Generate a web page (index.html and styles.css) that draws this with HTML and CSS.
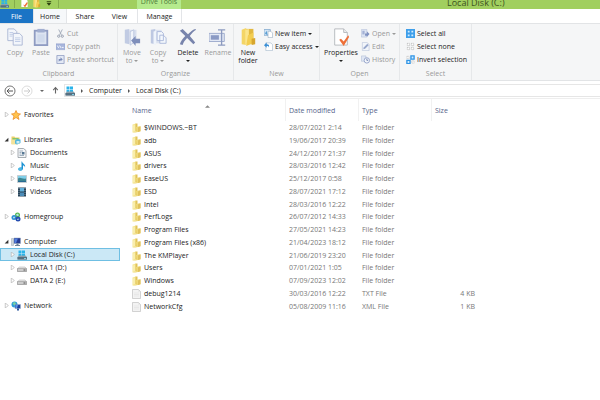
FILE: index.html
```html
<!DOCTYPE html>
<html lang="en">
<head>
<meta charset="utf-8">
<title>Local Disk (C:)</title>
<link rel="stylesheet" href="styles.css">
</head>
<body>
<svg class="sprite" aria-hidden="true">
  <symbol id="folder" viewBox="0 0 18 20"><path d="M1 3l7-2v16l-7 2z" fill="#f6e794"/><path d="M7 1h4v15H7z" fill="#e0c25a"/><path d="M8 8l9-2v11l-10 2-6 0 8-3z" fill="#eed878"/><path d="M12 9l5-2v9l-5 2z" fill="#dfc05c"/><path d="M3 5l2-1v12l-2 1z" fill="#fcf6c8"/></symbol>
  <symbol id="file" viewBox="0 0 18 20"><path d="M1 1h12l4 4v14H1z" fill="#f3f3f3" stroke="#aaa"/><path d="M13 1v4h4M4 8h10M4 11h10M4 14h10" fill="none" stroke="#ddd"/></symbol>
  <symbol id="disk" viewBox="0 0 20 20"><path d="M3 1h6v5H3zM10 1h6v5h-6zM3 7h6v5H3zM10 7h6v5h-6z" fill="#29b3ea"/><path d="M1 14l3-3h13l3 3v5H1z" fill="#8ba1ad"/><path d="M1 14h19v5H1z" fill="#566f80"/><path d="M14 16h4v2h-4z" fill="#7fd0e8"/></symbol>
  <symbol id="drive" viewBox="0 0 20 20"><path d="M1 11l4-3h11l3 3v6H1z" fill="#e6e6e6" stroke="#aaa"/><path d="M1 11h18v6H1z" fill="#ccc" stroke="#888"/><path d="M13 14h4" stroke="#555" stroke-width="2"/></symbol>
  <symbol id="star" viewBox="0 0 20 20"><path d="M10 1l3 6 6 1-5 4 2 7-6-4-6 4 2-7-5-4 6-1z" fill="#ffc34d" stroke="#ec8b26" stroke-width="1.5"/></symbol>
  <symbol id="library" viewBox="0 0 20 20"><path d="M1 3h6l1 2h9v13H1z" fill="#ebcf67"/><path d="M3 6h12v6H3z" fill="#88c56c"/><path d="M1 9h12v10H1z" fill="#f4e39a"/><path d="M8 11l4-3 7 1v7l-7 3-4-2z" fill="#54b6dc"/><path d="M11 12h6v5h-6z" fill="#cbedf5"/></symbol>
  <symbol id="docs" viewBox="0 0 20 20"><path d="M2 1h11l5 4v14H2z" fill="#f5f6f7" stroke="#8b949b" stroke-width="1.5"/><path d="M5 6h7M5 9h4M5 12h4M5 15h9" stroke="#8299ac" stroke-width="1.5"/><path d="M10 8h5v5h-5z" fill="#577894"/></symbol>
  <symbol id="music" viewBox="0 0 20 20"><path d="M10 1c1 5 8 5 6 12-1-4-3-4-4-4v6c0 3-3 5-7 4-4-2-1-7 4-6V1z" fill="#1c93d4"/><ellipse cx="6" cy="16" rx="4" ry="3" fill="#4db8e5"/></symbol>
  <symbol id="pics" viewBox="0 0 20 20"><path d="M1 3h18v14H1z" fill="#fff" stroke="#8b9ca5"/><path d="M2 4h16v6H2z" fill="#80cfe9"/><path d="M2 9c5-4 8 2 16 0v7H2z" fill="#3b8591"/><path d="M2 14h16v2H2z" fill="#276b94"/></symbol>
  <symbol id="videos" viewBox="0 0 20 20"><path d="M2 1h16v18H2z" fill="#284459"/><path d="M6 2h8v7H6z" fill="#62b1dc"/><path d="M6 11h8v7H6z" fill="#4b8cb9"/><path d="M4 2v16M16 2v16" stroke="#d7e5ee" stroke-dasharray="2 2"/></symbol>
  <symbol id="homegroup" viewBox="0 0 20 20"><circle cx="13" cy="6" r="5" fill="#55b84b"/><circle cx="6" cy="11" r="5" fill="#2f8fd3"/><circle cx="14" cy="14" r="5" fill="#254db0"/><path d="M10 5l4-2 2 4-4 1zM4 10l3-1 1 3-3 1zM12 14l3-1 1 2-3 1z" fill="#b9e6ed"/></symbol>
  <symbol id="computer" viewBox="0 0 20 20"><path d="M1 3h4v14H1z" fill="#d1d8dd" stroke="#9aa6b0"/><path d="M6 2h13v11H6z" fill="#273b91" stroke="#90a2ba"/><path d="M7 3h7l-4 9H7z" fill="#527fdf"/><path d="M11 13h4v3h3v2H8v-2h3z" fill="#72869a"/></symbol>
  <symbol id="network" viewBox="0 0 20 20"><circle cx="7" cy="7" r="6" fill="#2b9bd9"/><path d="M3 4l5-2 2 4-4 3z" fill="#7bd3a0"/><path d="M8 7h11v8H8z" fill="#223f9b" stroke="#9bb2c9"/><path d="M9 8h5l-2 6H9z" fill="#5592ea"/><path d="M12 15h4v4h-4z" fill="#29549b"/></symbol>
  <symbol id="twig" viewBox="0 0 8 8"><path d="M2 0l5 4-5 4z" fill="#fff" stroke="#aaa"/></symbol>
  <symbol id="twig-open" viewBox="0 0 8 8"><path d="M7 1v6H1z" fill="#333"/></symbol>

  <symbol id="copy" viewBox="0 0 18 20"><g fill="#f3f6fb" stroke="#a9b6d4"><path d="M1 1h7l3 3v10H1z"/><path d="M7 6h7l3 3v10H7z"/><path d="M3 5h4M3 7h4M3 9h3M9 11h6M9 13h6M9 15h6" stroke="#bccae5"/></g></symbol>
  <symbol id="paste" viewBox="0 0 18 20"><path d="M1 2h16v18H1z" fill="#8f9cc2"/><path d="M3 4h12v14H3z" fill="#dde4f1"/><path d="M5 1h8v4H5z" fill="#a1aed0"/><path d="M5 7h8v9H5z" fill="#d0daec"/></symbol>
  <symbol id="moveto" viewBox="0 0 18 20"><path d="M1 2l5-1v17l-5-1z" fill="#c1cbe3"/><path d="M6 2h8v15H6z" fill="#d7deee"/><path d="M7 4l4-2v14l-4 3z" fill="#f0f4fb" stroke="#bac5df"/><path d="M8 14l5-5v3h5v5h-5v3z" fill="#7f8fbb"/></symbol>
  <symbol id="copyto" viewBox="0 0 18 20"><path d="M1 2l5-1v17l-5-1z" fill="#bdc8e2"/><path d="M6 2h7v15H6z" fill="#dbe2f0"/><path d="M4 4l3-1v15l-3 1z" fill="#eff4fb"/><path d="M8 4h5l2 2v8H8zM11 8h4l3 3v6h-7z" fill="#f3f7fc" stroke="#a9b7d9"/></symbol>
  <symbol id="delete" viewBox="0 0 20 20"><path d="M1 3l3-2 6 6c3-3 5-5 8-6l1 1c-3 2-5 4-7 7l6 7-2 2-7-7c-3 3-4 5-5 8l-3-1c1-3 3-6 6-9z" fill="#7884ac"/></symbol>
  <symbol id="rename" viewBox="0 0 20 20"><path d="M0 6h17v9H0z" fill="#e3e9f5" stroke="#9aa7cb"/><path d="M2 8h9v5H2z" fill="#8b9ac4"/><path d="M10 2h8M14 2v17M10 19h8" fill="none" stroke="#8c9ac0" stroke-width="1.5"/></symbol>
  <symbol id="newfolder" viewBox="0 0 18 20"><path d="M2 2l5-2v19l-5-1z" fill="#f4d566"/><path d="M7 1h8v15H7z" fill="#e2b840"/><path d="M6 2l4-1v15l-4 3z" fill="#fbe58c"/><path d="M9 8l6-3v12l-8 3z" fill="#f3cd50"/><path d="M13 12l4-1v7l-4 1z" fill="#d7a62e"/></symbol>
  <symbol id="properties" viewBox="0 0 18 20"><path d="M2 1h10l4 4v14H2z" fill="#fff" stroke="#b3b7bb"/><path d="M12 1v4h4" fill="#eee" stroke="#b3b7bb"/><path d="M7 13l2-1 3 3 5-7 1 2-6 10z" fill="#ee7039"/></symbol>

  <symbol id="cut" viewBox="0 0 20 20"><path d="M6 1l6 12M14 1L8 13" stroke="#a0a9b8" stroke-width="2"/><circle cx="6" cy="16" r="2.5" fill="none" stroke="#929bac" stroke-width="2"/><circle cx="14" cy="16" r="2.5" fill="none" stroke="#929bac" stroke-width="2"/></symbol>
  <symbol id="path" viewBox="0 0 20 20"><path d="M0 4h20v13H0z" fill="#a8b6dc" stroke="#8899c7"/><path d="M3 8l3 5M8 8l3 5M13 12h4" stroke="#fff" stroke-width="2"/></symbol>
  <symbol id="shortcut" viewBox="0 0 20 20"><path d="M2 1h16v18H2z" fill="#e3e9f5" stroke="#97a4c6" stroke-width="2"/><path d="M6 15V9h4V5l5 5-5 4v-3" fill="#7b8cb8"/></symbol>
  <symbol id="newitem" viewBox="0 0 20 20"><path d="M0 1h14v13H0z" fill="#d3e5f5" stroke="#6f9dc7" stroke-width="1.5"/><path d="M9 5h6l4 4v10H9z" fill="#fff" stroke="#7894ad"/><path d="M2 10l4-6 2 10z" fill="#5a9fd2"/></symbol>
  <symbol id="easy" viewBox="0 0 20 20"><path d="M4 2h11l4 4v13H4z" fill="#fff" stroke="#87a1b9"/><path d="M0 7l6-6v4c5 0 6 2 5 7-1-3-2-3-5-3v4z" fill="#3a8fd6"/></symbol>
  <symbol id="open" viewBox="0 0 20 20"><path d="M1 1h12v17H1z" fill="#dce4f3" stroke="#a8b5d5"/><path d="M3 4h5v8H3z" fill="#a3b1d5"/><path d="M9 10h4V5l6 6-6 7v-3H9z" fill="#8092c1"/></symbol>
  <symbol id="edit" viewBox="0 0 20 20"><path d="M3 1h10l5 4v14H3z" fill="#f2f5fa" stroke="#a3b0cf"/><path d="M5 16l1-4 8-8 3 3-8 8z" fill="#98a8cc"/></symbol>
  <symbol id="history" viewBox="0 0 20 20"><path d="M1 2h10v12H1z" fill="#dfe6f3" stroke="#a3b0cf"/><circle cx="13" cy="12" r="6" fill="#f3f6fb" stroke="#93a2c8" stroke-width="2"/><path d="M13 8v4h3" fill="none" stroke="#7485b1" stroke-width="2"/></symbol>
  <symbol id="all" viewBox="0 0 20 20"><path d="M0 0h20v20H0z" fill="#3f9fea"/><path d="M4 4h4v4H4zM12 4h4v4h-4zM4 12h4v4H4zM12 12h4v4h-4z" fill="#d2edff"/></symbol>
  <symbol id="none" viewBox="0 0 20 20"><path d="M3 3h5v5H3zM12 3h5v5h-5zM3 12h5v5H3zM12 12h5v5h-5z" fill="#fff" stroke="#888" stroke-dasharray="2 1"/></symbol>
  <symbol id="invert" viewBox="0 0 20 20"><path d="M2 3h5v5H2zM13 13h5v5h-5z" fill="#fff" stroke="#999" stroke-dasharray="2 1"/><path d="M11 2h7v7h-7zM2 12h7v7H2z" fill="#d2edff" stroke="#2f94e5" stroke-width="3"/></symbol>
</svg>

<header class="titlebar">
  <div class="quick">
    <svg class="i9"><use href="#disk"/></svg><span class="bar"></span>
    <svg class="i9" viewBox="0 0 20 20"><path d="M3 0h10l4 4v14H3z" fill="#fff"/><path d="M7 12l3 2 6-8 1 4-6 9z" fill="#ee7039"/></svg>
    <svg class="i9"><use href="#newfolder"/></svg>
    <svg class="i9" viewBox="0 0 20 20"><path d="M6 5h10v2H6zM6 9h10l-5 6z" fill="#2d4210"/></svg><span class="bar"></span>
  </div>
  <span class="context">Drive Tools</span>
  <h1 class="title">Local Disk (C:)</h1>
</header>

<nav class="tabs">
  <button class="tab file">File</button>
  <button class="tab active">Home</button>
  <button class="tab share">Share</button>
  <button class="tab view">View</button>
  <button class="tab manage">Manage</button>
</nav>

<section class="ribbon">
  <div class="group clipboard">
    <div class="tools">
      <button class="big off"><svg><use href="#copy"/></svg>Copy</button>
      <button class="big off"><svg><use href="#paste"/></svg>Paste</button>
      <div class="stack">
        <button class="small off"><svg><use href="#cut"/></svg>Cut</button>
        <button class="small off"><svg><use href="#path"/></svg>Copy path</button>
        <button class="small off"><svg><use href="#shortcut"/></svg>Paste shortcut</button>
      </div>
    </div>
    <h2>Clipboard</h2>
  </div>
  <div class="group organize">
    <div class="tools">
      <button class="big off"><svg><use href="#moveto"/></svg>Move<span>to <i class="caret"></i></span></button>
      <button class="big off"><svg><use href="#copyto"/></svg>Copy<span>to <i class="caret"></i></span></button>
      <button class="big wide"><svg><use href="#delete"/></svg>Delete<span><i class="caret"></i></span></button>
      <button class="big off"><svg><use href="#rename"/></svg>Rename</button>
    </div>
    <h2>Organize</h2>
  </div>
  <div class="group new">
    <div class="tools">
      <button class="big"><svg><use href="#newfolder"/></svg>New<span>folder</span></button>
      <div class="stack">
        <button class="small"><svg><use href="#newitem"/></svg>New item <i class="caret"></i></button>
        <button class="small"><svg><use href="#easy"/></svg>Easy access <i class="caret"></i></button>
      </div>
    </div>
    <h2>New</h2>
  </div>
  <div class="group open">
    <div class="tools">
      <button class="big wide"><svg><use href="#properties"/></svg>Properties<span><i class="caret"></i></span></button>
      <div class="stack">
        <button class="small off"><svg><use href="#open"/></svg>Open <i class="caret"></i></button>
        <button class="small off"><svg><use href="#edit"/></svg>Edit</button>
        <button class="small off"><svg><use href="#history"/></svg>History</button>
      </div>
    </div>
    <h2>Open</h2>
  </div>
  <div class="group select">
    <div class="tools">
      <div class="stack">
        <button class="small"><svg><use href="#all"/></svg>Select all</button>
        <button class="small"><svg><use href="#none"/></svg>Select none</button>
        <button class="small"><svg><use href="#invert"/></svg>Invert selection</button>
      </div>
    </div>
    <h2>Select</h2>
  </div>
</section>

<nav class="address">
  <button class="nav" aria-label="Back"><svg viewBox="0 0 24 24"><circle cx="12" cy="12" r="10" fill="#fff" stroke="#777" stroke-width="2"/><path d="M18 12H7M11 7l-5 5 5 5" fill="none" stroke="#555" stroke-width="2"/></svg></button>
  <button class="nav" aria-label="Forward"><svg viewBox="0 0 24 24"><circle cx="12" cy="12" r="10" fill="#fff" stroke="#ddd" stroke-width="2"/><path d="M6 12h11M13 7l5 5-5 5" fill="none" stroke="#ccc" stroke-width="2"/></svg></button>
  <button class="nav" aria-label="Recent locations"><i class="caret"></i></button>
  <button class="nav" aria-label="Up"><svg viewBox="0 0 24 24"><path d="M12 20V5M6 11l6-7 6 7" fill="none" stroke="#666" stroke-width="3"/></svg></button>
  <div class="crumbs">
    <svg class="i10"><use href="#disk"/></svg><i class="sep"></i><a href="#computer-list">Computer</a><i class="sep"></i><a href="#files">Local Disk (C:)</a>
  </div>
</nav>

<main class="content">
  <aside class="tree">
    <ul>
      <li><svg class="tw"><use href="#twig"/></svg><svg class="ic"><use href="#star"/></svg><a href="#favorites">Favorites</a></li>
    </ul>
    <ul>
      <li><svg class="tw"><use href="#twig-open"/></svg><svg class="ic"><use href="#library"/></svg><a href="#libraries">Libraries</a></li>
      <li class="sub"><svg class="tw"><use href="#twig"/></svg><svg class="ic"><use href="#docs"/></svg><a href="#documents">Documents</a></li>
      <li class="sub"><svg class="tw"><use href="#twig"/></svg><svg class="ic"><use href="#music"/></svg><a href="#music-library">Music</a></li>
      <li class="sub"><svg class="tw"><use href="#twig"/></svg><svg class="ic"><use href="#pics"/></svg><a href="#pictures">Pictures</a></li>
      <li class="sub"><svg class="tw"><use href="#twig"/></svg><svg class="ic"><use href="#videos"/></svg><a href="#videos-library">Videos</a></li>
    </ul>
    <ul>
      <li><svg class="tw"><use href="#twig"/></svg><svg class="ic"><use href="#homegroup"/></svg><a href="#home">Homegroup</a></li>
    </ul>
    <ul id="computer-list">
      <li><svg class="tw"><use href="#twig-open"/></svg><svg class="ic"><use href="#computer"/></svg><a href="#computer-list">Computer</a></li>
      <li class="sub selected"><svg class="tw"><use href="#twig"/></svg><svg class="ic"><use href="#disk"/></svg><a href="#files">Local Disk (C:)</a></li>
      <li class="sub"><svg class="tw"><use href="#twig"/></svg><svg class="ic"><use href="#drive"/></svg><a href="#d">DATA 1 (D:)</a></li>
      <li class="sub"><svg class="tw"><use href="#twig"/></svg><svg class="ic"><use href="#drive"/></svg><a href="#e">DATA 2 (E:)</a></li>
    </ul>
    <ul>
      <li><svg class="tw"><use href="#twig"/></svg><svg class="ic"><use href="#network"/></svg><a href="#net">Network</a></li>
    </ul>
  </aside>
  <div class="list">
    <table id="files">
      <thead><tr><th class="name">Name<svg class="sort" viewBox="0 0 8 4"><path d="M0 4l4-4 4 4z" fill="#888"/></svg></th><th class="date">Date modified</th><th class="type">Type</th><th class="size">Size</th><th></th></tr></thead>
      <tbody>
        <tr><td><svg><use href="#folder"/></svg>$WINDOWS.~BT</td><td>28/07/2021 2:14</td><td>File folder</td><td></td><td></td></tr>
        <tr><td><svg><use href="#folder"/></svg>adb</td><td>19/06/2017 20:39</td><td>File folder</td><td></td><td></td></tr>
        <tr><td><svg><use href="#folder"/></svg>ASUS</td><td>24/12/2017 21:37</td><td>File folder</td><td></td><td></td></tr>
        <tr><td><svg><use href="#folder"/></svg>drivers</td><td>28/03/2016 12:42</td><td>File folder</td><td></td><td></td></tr>
        <tr><td><svg><use href="#folder"/></svg>EaseUS</td><td>25/12/2017 0:58</td><td>File folder</td><td></td><td></td></tr>
        <tr><td><svg><use href="#folder"/></svg>ESD</td><td>28/07/2021 17:12</td><td>File folder</td><td></td><td></td></tr>
        <tr><td><svg><use href="#folder"/></svg>Intel</td><td>28/03/2016 12:22</td><td>File folder</td><td></td><td></td></tr>
        <tr><td><svg><use href="#folder"/></svg>PerfLogs</td><td>26/07/2012 14:33</td><td>File folder</td><td></td><td></td></tr>
        <tr><td><svg><use href="#folder"/></svg>Program Files</td><td>27/05/2021 14:23</td><td>File folder</td><td></td><td></td></tr>
        <tr><td><svg><use href="#folder"/></svg>Program Files (x86)</td><td>21/04/2023 18:12</td><td>File folder</td><td></td><td></td></tr>
        <tr><td><svg><use href="#folder"/></svg>The KMPlayer</td><td>21/06/2019 23:20</td><td>File folder</td><td></td><td></td></tr>
        <tr><td><svg><use href="#folder"/></svg>Users</td><td>07/01/2021 1:05</td><td>File folder</td><td></td><td></td></tr>
        <tr><td><svg><use href="#folder"/></svg>Windows</td><td>07/09/2023 12:02</td><td>File folder</td><td></td><td></td></tr>
        <tr><td><svg><use href="#file"/></svg>debug1214</td><td>30/03/2016 12:22</td><td>TXT File</td><td>4 KB</td><td></td></tr>
        <tr><td><svg><use href="#file"/></svg>NetworkCfg</td><td>05/08/2009 11:16</td><td>XML File</td><td>1 KB</td><td></td></tr>
      </tbody>
    </table>
  </div>
</main>
</body>
</html>
```
FILE: styles.css
```css
* { box-sizing: border-box; }
body { margin: 0; background: #fff; color: #222; font: 7px/8px "Open Sans", "Noto Sans", sans-serif; }
button { border: 0; padding: 0; margin: 0; background: none; color: inherit; font: inherit; white-space: nowrap; }
a { color: inherit; text-decoration: none; }
svg { flex: none; overflow: visible; }
h1, h2 { margin: 0; font-weight: 400; }
ul { list-style: none; margin: 0; padding: 0; }
.sprite { display: none; }
.i9 { width: 9px; height: 9px; }
.i10 { width: 10px; height: 10px; }
.caret { display: inline-block; border: 2px solid transparent; border-top-color: currentColor; border-bottom: 0; vertical-align: middle; }

.titlebar { display: flex; height: 9px; overflow: hidden; background: #a1cf5f; color: #3c5220; }
.quick { display: flex; width: 137px; gap: 3px; margin-top: -1px; }
.bar { width: 1px; margin: 1px 2px; background: #84ac4b; }
.context { width: 44px; background: #b5ea8d; color: #4d7a3a; text-align: center; line-height: 4px; }
.title { margin-left: 266px; font-size: 9px; line-height: 6px; white-space: nowrap; }

.tabs { display: flex; height: 14px; background: #fff; }
.tab { height: 14px; text-align: center; line-height: 15px; }
.file { width: 33px; background: #1b74c5; color: #fff; }
.active { width: 34px; background: #f6f8fa; border: solid #e3e5e8; border-width: 0 1px; }
.share { width: 36px; }
.view { width: 33px; }
.manage { width: 45px; margin-left: 1px; border: solid #e3e5e8; border-width: 0 1px; }

.ribbon { display: flex; height: 58px; background: #f5f6f7; border: solid #e2e4e6; border-width: 1px 0; }
.group { display: flex; flex-direction: column; border-right: 1px solid #e6e8ea; }
.tools { display: flex; height: 45px; padding-top: 3px; }
.group h2 { color: #999; text-align: center; font-size: 7px; line-height: 9px; }
.big { display: flex; flex-direction: column; align-items: center; width: 26px; }
.big svg { width: 18px; height: 18px; margin: 1px 0 3px; }
.big span { min-height: 8px; }
.wide { width: 34px; }
.stack { display: flex; flex-direction: column; margin-left: 3px; }
.small { display: flex; align-items: center; gap: 2px; height: 13px; }
.small svg { width: 9px; height: 9px; }
.off { color: #999; }
.clipboard { width: 118px; }
.clipboard .tools { padding-left: 2px; }
.clipboard .stack { margin-left: 2px; }
.organize { width: 116px; }
.organize .tools { padding-left: 1px; }
.new { width: 86px; }
.new .tools { padding-left: 1px; }
.open { width: 80px; }
.open .tools { padding-left: 4px; }
.select { width: 72px; }
.select .tools { padding-left: 3px; }

.address { display: flex; align-items: center; height: 16px; margin-top: 2px; padding-left: 4px; border-bottom: 1px solid #eee; }
.nav { display: flex; align-items: center; justify-content: center; width: 12px; height: 12px; margin-right: 5px; color: #666; }
.nav svg { width: 12px; height: 12px; }
.nav:nth-of-type(n+3) { width: 8px; }
.nav:nth-of-type(n+4) svg { width: 9px; height: 9px; }
.crumbs { display: flex; flex: 1; align-items: center; gap: 6px; height: 13px; border: 1px solid #e6e6e6; border-right: 0; }
.sep { border: 2px solid transparent; border-left-color: #555; border-right: 0; }

.content { display: flex; }
.tree { display: flex; flex-direction: column; gap: 12px; width: 120px; padding-top: 9px; }
.tree li { display: flex; align-items: center; height: 13px; padding-left: 4px; white-space: nowrap; }
.tree .sub { padding-left: 10px; }
.tw { width: 5px; height: 5px; margin-right: 2px; }
.ic { width: 10px; height: 10px; margin-right: 3px; }
.tree .selected { background: #cbe8f6; border: 1px solid #6fbfe3; padding-left: 9px; }

.list { flex: 1; padding-left: 12px; }
table { width: 100%; border-collapse: separate; border-spacing: 0; table-layout: fixed; }
th, td { padding: 0 0 0 4px; text-align: left; font-weight: 400; white-space: nowrap; height: 13px; }
th:first-child, td:first-child { padding-left: 0; }
tr:nth-child(4n) td { height: 12px; }
th { height: 22px; padding-top: 2px; color: #56648a; }
th + th { padding-left: 3px; border-left: 1px solid #f1f1f1; }
th:last-child { border-left: 0; }
.name { width: 153px; }
.date { width: 73px; }
.type { width: 73px; }
.size { width: 44px; }
td { color: #777; }
td:first-child { color: #222; }
td:nth-child(4) { text-align: right; }
td svg { display: inline-block; width: 9px; height: 10px; margin: 0 3px 0 0; vertical-align: middle; }
.sort { width: 5px; height: 3px; margin: 0 0 9px 53px; vertical-align: middle; }
```
